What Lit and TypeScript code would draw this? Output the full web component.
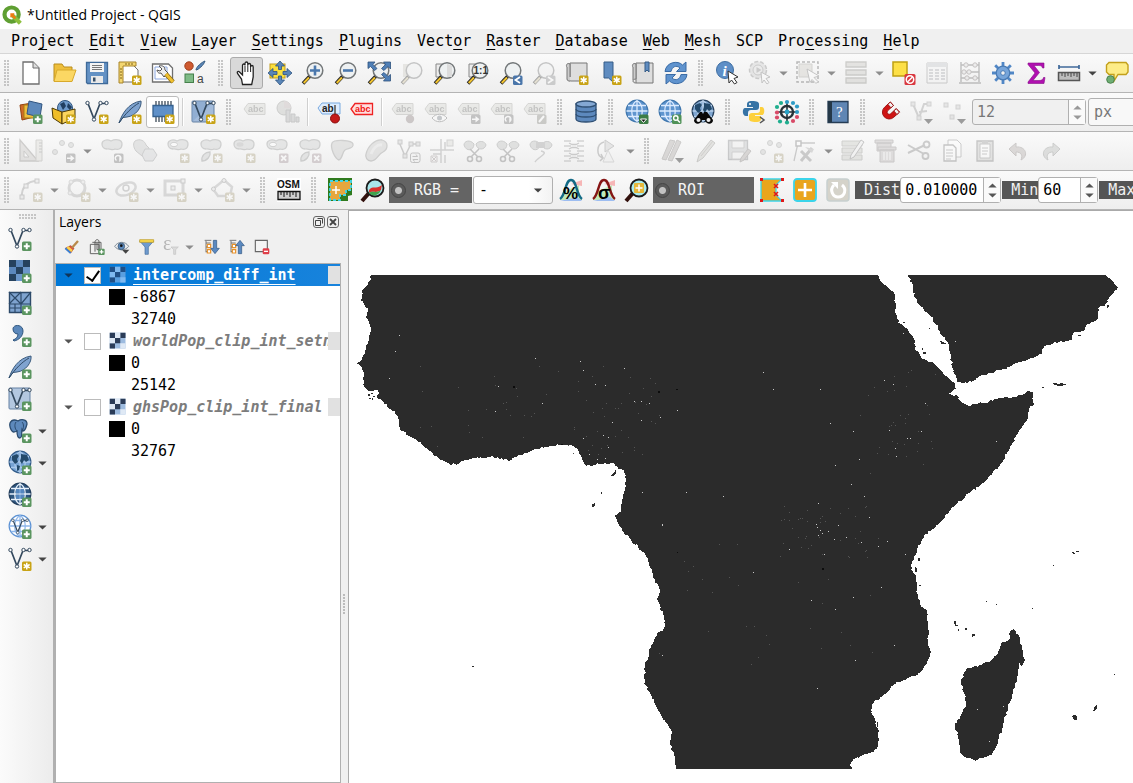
import { LitElement, html, svg, css, nothing } from "lit";
import { customElement, property } from "lit/decorators.js";
import { classMap } from "lit/directives/class-map.js";

/* ---------- icon building blocks (24 x 24 grid) ---------- */

const badge = (fill: string, mark: unknown) => svg`
  <rect x="14" y="14.500" width="9.500" height="9.500" rx="1.500" fill=${fill} />${mark}`;
const plusBadge = badge("#5b9560", svg`<path d="M18.750 16.200v6M15.750 19.200h6" stroke="#fff" stroke-width="2" />`);
const starBadge = badge("#c8a316", svg`<path d="M18.750 15.800v6.800M15.700 17.500l6 3.400M21.700 17.500l-6 3.400" stroke="#fff" stroke-width="1.500" />`);
const crossBadge = badge("#c9899b", svg`<path d="M16.200 16.700l5 5M21.200 16.700l-5 5" stroke="#fff" stroke-width="1.800" />`);
const arrowBadge = badge("#777", svg`<path d="M15 18.500h3.500v-2.500l4 3.200-4 3.300v-2.500H15z" fill="#fff" />`);
const turnBadge = badge("#777", svg`<path d="M16.500 21.500a2.800 2.800 0 1 1 3.500-.3v-3" fill="none" stroke="#fff" stroke-width="1.500" />`);

const lens = (inner: unknown, glass = "#eef1f2") => svg`
  <path d="M9 15l-7 7.500" stroke="#222" stroke-width="3.600" />
  <path d="M8 16.500l-5.300 5.500" stroke="#f2c430" stroke-width="2" />
  <circle cx="14" cy="9.500" r="7.800" fill=${glass} stroke="#737779" stroke-width="1.500" />${inner}`;

const vee = svg`
  <path d="M3 3.500L9 19 15 3.500h6.500" fill="none" stroke="#34495e" stroke-width="1.700" />
  <g fill="#fff" stroke="#34495e" stroke-width="1"><circle cx="2.500" cy="3" r="1.700" /><circle cx="9" cy="19.500" r="1.700" /><circle cx="15.500" cy="3" r="1.700" /><circle cx="21.500" cy="3" r="1.700" /></g>`;

const globe = (fill: string, line: string, edge = "#3f76ad") => svg`
  <circle cx="12" cy="11" r="10.800" fill=${fill} stroke=${edge} stroke-width="1.300" />
  <path d="M1.500 11h21M3 5.500h18M3 16.500h18M12 .5v21M12 .5c-7 4-7 17 0 21M12 .5c7 4 7 17 0 21" fill="none" stroke=${line} stroke-width="1.300" />`;
const land = svg`<path d="M4 5l5-2 2 2-2 3 1 3-3 2-3-4zM13 3l6 1 2 5-3 2-2-2-2 4-2-3 1-3zM9 14l3 1-1 4-2 1z" fill="#234a6b" />`;

const tag = svg`<path d="M1 9l4-5.500h17v11H5z" fill="#d6d7c0" stroke="#a2a58e" /><text x="5" y="12" font-size="9" font-weight="700" fill="#70736a" font-family="Liberation Sans, Arial, sans-serif">abc</text>`;
const blob = svg`<path d="M2 5c0-4 5-5 9-3 4-2 11-2 11 3s-4 6-7 5c-3 2-5-1-8 0-3 0-5-2-5-5z" fill="#c6cbca" stroke="#8e9492" stroke-width="1.300" />`;
const blobTail = svg`${blob}<path d="M3 22c-1-5 3-9 8-9 1 4-3 9-8 9z" fill="#c6cbca" stroke="#8e9492" stroke-width="1.300" />`;
const blobHole = svg`${blob}<ellipse cx="8" cy="5.500" rx="3.500" ry="2.200" fill="#fff" stroke="#8e9492" />`;
const feather = svg`<path d="M1 23C4 14 10 3 23 1c1 6-5 15-14 16l-4 .5z" fill="#7fa3cf" stroke="#3a5a7c" /><path d="M1 23C7 14 14 7 21 3" fill="none" stroke="#2f4a66" />`;
const dots = svg`<g fill="#c9cac8" stroke="#999c9a"><circle cx="3" cy="13" r="2.500" /><circle cx="10" cy="4" r="2.500" /><circle cx="19" cy="6" r="2.500" /></g>`;
const page = svg`<path d="M4 1h10l6 6v16H4z" fill="#fff" stroke="#6f6f6f" stroke-width="1.300" /><path d="M14 1v6h6" fill="#ddd" stroke="#6f6f6f" />`;
const checker = (a: string, b: string, c: string) => svg`
  <rect x="1" y="1" width="21" height="21" fill=${b} />
  <path d="M1 1h7v7H1zM15 1h7v7h-7zM8 8h7v7H8zM1 15h7v7H1z" fill=${a} />
  <path d="M8 1h7v7H8zM1 8h7v7H1zM15 15h7v7h-7z" fill=${c} />`;
const leaves = svg`<path d="M1 6c0-4 6-6 10-1 0 7-8 8-10 1zM13 5c3-4 9-3 10 1-1 5-9 6-10-1z" fill="#b9beb9" stroke="#858b87" />`;
const scissors = svg`<path d="M7 10l8 8M16 10l-8 8" stroke="#777" stroke-width="1.500" /><g fill="none" stroke="#777" stroke-width="1.600"><circle cx="7" cy="20" r="2.500" /><circle cx="16" cy="20" r="2.500" /></g>`;
const pencil = svg`<path d="M3 23l2-7L17 1l4 3L9 19z" fill="#c9c3ae" stroke="#8b8778" /><path d="M19 2L7 17" stroke="#9c947b" />`;
const database = svg`<path d="M2 4v15c0 4 20 4 20 0V4z" fill="#5d89bd" stroke="#2f4f73" stroke-width="1.300" /><ellipse cx="12" cy="4" rx="10" ry="3" fill="#84a8d3" stroke="#2f4f73" stroke-width="1.300" /><path d="M2 9c0 4 20 4 20 0M2 14c0 4 20 4 20 0" fill="none" stroke="#2f4f73" stroke-width="1.300" />`;
const tree = svg`<path d="M3 3v17M3 6h7M3 12h7M3 19h7M1 2h10" stroke="#666" fill="none" stroke-width="1.300" /><path d="M5 8h5v5H5zM5 16h5v5H5z" fill="#fff" stroke="#e8922a" stroke-width="1.800" />`;

const icons: Record<string, unknown> = {
  logo: svg`<circle cx="11.500" cy="11.500" r="8.500" fill="none" stroke="#5f9f32" stroke-width="5" /><path d="M12 12l10 10" stroke="#8cbf3c" stroke-width="5" /><path d="M10 10h5l-1 2 3 3-2 2-3-3-2 1z" fill="#ee7913" />`,
  file: page,
  folder: svg`<path d="M2 20V3h8l2 3h8v14z" fill="#eebf3c" stroke="#b98d1c" /><path d="M2 20.500L5 9h19l-4 11.500z" fill="#fbd763" stroke="#d8a92b" />`,
  save: svg`<path d="M1.500 1.500h21v21h-20l-1-1z" fill="#6391c4" stroke="#3f6a99" stroke-width="1.300" /><path d="M5 2h14v9H5z" fill="#f4f4f4" /><path d="M7 4.500h10M7 6.500h10M7 8.500h10" stroke="#777" /><path d="M6 15h12v7H6z" fill="#e9e9e9" /><path d="M8 16.500h2.500v4H8z" fill="#37506b" />`,
  layout: svg`<path d="M3 4h12l5 5v12H3z" fill="#fff" stroke="#6f6f6f" /><path d="M1 1h17v4H5v17H1z" fill="#f3d671" stroke="#a8842a" /><path d="M2 8h2M2 11h2M2 14h2M2 17h2M8 2v2M11 2v2M14 2v2" stroke="#80641c" />${starBadge}`,
  layouts: svg`<path d="M1.500 3h16l4 4v14h-20z" fill="#fff" stroke="#6f6f6f" stroke-width="1.300" /><path d="M4 6h12v12H4z" fill="none" stroke="#8aa6df" /><path d="M8 5c4-1 6 1 6 4l3 3-4 4-3-4c-3 1-4-2-4-3l3 1 2-2z" fill="#eee" stroke="#555" /><path d="M15 13l7 8" stroke="#8b6a12" stroke-width="4.500" /><path d="M15 13l7 8" stroke="#efc031" stroke-width="3" />`,
  style: svg`<circle cx="5" cy="5" r="4.200" fill="#cf5a30" stroke="#a03f1c" /><path d="M12 9c2 0 8-5 9-9-3 1-9 6-9 9z" fill="#5b87b9" stroke="#33597f" /><rect x="1" y="13" width="8.500" height="8.500" fill="#7fbb86" stroke="#45804b" /><text x="13" y="22" font-size="12" fill="#444" font-family="Liberation Sans, Arial, sans-serif">a</text>`,
  hand: svg`<path d="M7.500 23.500L6.500 18 2.500 12.500c-1-2 1-2.500 2-1.500L7.500 14V4.500c0-2 2.500-2 2.500 0V2.500c0-2 2.800-2 2.800 0V4c0-2 2.800-2 2.800 0v2c0-2 2.600-2 2.600 0v10l-1.500 7.500z" fill="#fff" stroke="#222" stroke-width="1.300" /><path d="M10 5v6M12.800 4v7M15.600 5v6" stroke="#222" />`,
  panto: svg`<rect x="2" y="3" width="15" height="14" fill="#fbdf3d" stroke="#c29b1b" /><path d="M12 0l4.500 5h-3v3.500h-3V5h-3zM12 24l-4.500-5h3v-4h3v4h3zM0 12l5-4.500v3h4v3H5v3zM24 12l-5-4.500v3h-4v3h4v3z" fill="#5a86b8" stroke="#2f5480" stroke-width=".8" />`,
  zoomin: lens(svg`<path d="M14 4.500v10M9 9.500h10" stroke="#4b78ad" stroke-width="2.600" />`),
  zoomout: lens(svg`<path d="M9 9.500h10" stroke="#4b78ad" stroke-width="2.600" />`),
  zoomfull: svg`${lens(nothing)}<path d="M1 1h7L6 3.500l4 4-2.500 2-4-4L1 7.500zM23.500 1h-7l2 2.500-4 4 2.500 2 4-4 2.500 2.500zM23.500 20h-7l2-2.500-4-4 2.500-2 4 4 2.500-2z" fill="#4f7fb6" stroke="#2d527c" stroke-width=".8" />`,
  zoomsel: svg`<rect x="3" y="3" width="12" height="13" fill="#cfceae" />${lens(nothing)}`,
  zoomlayer: svg`<path d="M3 3h14v13H3z" fill="#ececec" stroke="#888" />${lens(svg`<path d="M14 3v13h5V4z" fill="#dcdcdc" />`)}`,
  zoomone: svg`<path d="M3 3h14v13H3z" fill="#ececec" stroke="#888" />${lens(svg`<text x="7.500" y="13" font-size="10" font-weight="700" fill="#333" font-family="Liberation Sans, Arial, sans-serif">1:1</text>`)}`,
  zoomlast: svg`${lens(nothing)}${badge("#4a76aa", svg`<path d="M21 16l-4.500 3 4.500 3" fill="none" stroke="#fff" stroke-width="1.800" />`)}`,
  zoomnext: svg`${lens(nothing)}${badge("#8a8f94", svg`<path d="M16 16l4.500 3-4.500 3" fill="none" stroke="#fff" stroke-width="1.800" />`)}`,
  newview: svg`<path d="M5 2h17v18H6c-4 0-4-4-1-4z" fill="#dedede" stroke="#777" /><path d="M5 16V3C1 1 1 6 2 6v12c0 2 2 2 3 2" fill="#ccc" stroke="#777" />${starBadge}`,
  bookmark: svg`<path d="M6 1h9v20l-4.500-4H6z" fill="#5f8cc0" stroke="#365c87" />${starBadge}`,
  bookmarks: svg`<path d="M5 2h17v20H5z" fill="#dedede" stroke="#777" /><path d="M5 22c-4 0-4-4 0-4V3C1 1 1 6 2 6v13" fill="#ccc" stroke="#777" /><path d="M14 1h4v10l-2-2-2 2z" fill="#5f8cc0" stroke="#365c87" />`,
  refresh: svg`<path d="M1 10.500C2 1 14-1 18.500 4L22 1v9.500h-9.500L16 7C12 3.500 8 6 7 10.500z" fill="#5f93ce" stroke="#3a6ba5" /><path d="M23 13.500c-1 9.500-13 11.500-17.500 6.500L2 23v-9.500h9.500L8 17c4 3.500 8 1 9-3.500z" fill="#5f93ce" stroke="#3a6ba5" />`,
  info: svg`<circle cx="10" cy="9" r="8.500" fill="#5e8fc7" stroke="#3f6fa3" /><text x="7.500" y="14.500" font-size="15" font-weight="700" font-style="italic" fill="#fff" font-family="Liberation Serif, Times New Roman, serif">i</text><path d="M13 10l10 6-4 1.500 3 4-2.500 1.500-3-4-2.500 3z" fill="#fff" stroke="#333" />`,
  action: svg`<circle cx="10" cy="9" r="8.500" fill="#ccc" stroke="#888" stroke-width="1.500" stroke-dasharray="4 2" /><circle cx="10" cy="9" r="5" fill="#ddd" stroke="#888" /><path d="M8.500 6l5 3-5 3z" fill="#888" /><path d="M13 11l9 5-4 1.500 3 4-2 1.500-3-4-2 3z" fill="#fff" stroke="#777" />`,
  select: svg`<path d="M1 1h21v20H1z" fill="none" stroke="#555" stroke-dasharray="3 2" stroke-width="1.500" /><path d="M3 3h13v13H3z" fill="#d2ccae" stroke="#a39e80" /><path d="M11 8l12 7-5 1.500 4 4-2 2-4-4-2 3z" fill="#fff" stroke="#777" />`,
  bars: svg`<path d="M2 1h20v5H2zM2 9h20v5H2zM2 17h20v5H2z" fill="#cac6b0" stroke="#8e8b78" stroke-width="1.300" />`,
  deselect: svg`<rect x="1" y="1" width="14" height="14" fill="#fde047" stroke="#bfa013" stroke-width="1.500" /><rect x="12.500" y="13" width="11" height="11" rx="1.500" fill="#d9363e" /><circle cx="18" cy="18.500" r="3.700" fill="none" stroke="#fff" stroke-width="1.500" /><path d="M15.500 21l5-5" stroke="#fff" stroke-width="1.500" />`,
  table: svg`<path d="M2 2h20v20H2z" fill="#f4f4f4" stroke="#888" /><path d="M2 2h20v4H2z" fill="#b9c6d6" /><path d="M4 9h4M10 9h4M16 9h4M4 12h4M10 12h4M16 12h4M4 15h4M10 15h4M16 15h4M4 18h4M10 18h4M16 18h4" stroke="#8b98ab" stroke-width="1.500" />`,
  abacus: svg`<path d="M3 1v20M21 1v20M1 22h22M3 4h18M3 11h18M3 17h18" stroke="#666" stroke-width="1.400" /><g fill="#ddd" stroke="#866"><circle cx="8" cy="4" r="2.200" /><circle cx="17" cy="4" r="2.200" /><circle cx="6" cy="11" r="2.200" /><circle cx="11" cy="11" r="2.200" /><circle cx="17" cy="17" r="2.200" /><circle cx="9" cy="17" r="2.200" /></g>`,
  gear: svg`<g stroke="#5187c6" stroke-width="2.800"><path d="M12 1v22M1 12h22M4.200 4.200l15.600 15.600M19.800 4.200L4.200 19.800" /></g><circle cx="12" cy="12" r="6.800" fill="#77a5da" stroke="#4b7cb5" stroke-width="1.300" /><circle cx="12" cy="12" r="2.300" fill="#f2f2f2" stroke="#4b7cb5" />`,
  sigma: svg`<path d="M4 2h16v5h-1.500c-.5-2-1.500-2.500-4-2.500H10l5.500 7-6.500 8h6c3 0 4-1 4.500-3H21l-1 6H4v-1.500L11 12 4 3.500z" fill="#b010b0" stroke="#860d86" stroke-width=".6" />`,
  ruler: svg`<path d="M2 6h20M2 4v4M22 4v4" stroke="#40699a" stroke-width="1.700" /><path d="M1.500 11.500h21v8h-21z" fill="#bdbdbd" stroke="#555" stroke-width="1.500" /><path d="M5 12v3M8 12v4M11 12v3M14 12v4M17 12v3M20 12v4" stroke="#444" />`,
  tip: svg`<path d="M4 1.500h17l2 2.500v7l-2 2.500h-8L9 20v-6.500H4L1.500 11V4z" fill="#fdec87" stroke="#c3a01b" stroke-width="1.400" /><circle cx="5.500" cy="18.500" r="3.800" fill="#6fae74" stroke="#48824d" />`,

  sources: svg`<path d="M1 5l12-2 2 14-12 3z" fill="#cf6a27" stroke="#94430e" /><path d="M5 5h13v13H5z" fill="#eebe3d" stroke="#a67b13" /><path d="M10 1l13 3-2 13L8 14z" fill="#5e89bb" stroke="#315580" />${plusBadge}`,
  geopackage: svg`<circle cx="13" cy="8" r="7.500" fill="#6f9bcb" stroke="#2f557f" /><path d="M8 4l4-2 2 4-3 4zM16 3l4 4-2 3-3-3z" fill="#213f61" /><path d="M0 8l10 4v12L1 18z" fill="#efbd28" stroke="#4a3804" /><path d="M10 12l13-3v9l-13 6z" fill="#fad55f" stroke="#4a3804" />${starBadge}`,
  newshape: svg`${vee}${starBadge}`,
  newspatia: svg`${feather}${starBadge}`,
  memory: svg`<path d="M5 1v21M8 1v21M11 1v21M14 1v21M17 1v21M20 1v21" stroke="#3c4a58" stroke-width="1.300" /><path d="M2 5.500h20v11H2z" fill="#5f90c8" stroke="#35618f" stroke-width="1.300" />${starBadge}`,
  virtual: svg`<rect x="0" y="1" width="22" height="21" rx="1" fill="#a4bcdb" stroke="#6581a3" /><path d="M0 1h22L0 22z" fill="#7e9fc9" opacity=".5" />${vee}${starBadge}`,
  label: tag,
  diagram: svg`<circle cx="8" cy="8" r="7" fill="#bdbfb0" stroke="#878a80" /><path d="M8 8V1a7 7 0 0 1 7 7z" fill="#d9a8a8" /><path d="M10 10h4v12h-4zM15 14h4v8h-4zM20 17h3v5h-3z" fill="#aeb3b5" stroke="#80868a" />`,
  labelpin: svg`<path d="M1 8l4-5h18v11H5z" fill="#dcecff" stroke="#79a9df" /><text x="5" y="11.500" font-size="10" font-weight="700" fill="#222" font-family="Liberation Sans, Arial, sans-serif">ab</text><path d="M18 5v10" stroke="#777" stroke-width="2" /><circle cx="18" cy="18.500" r="4.500" fill="#c41919" stroke="#8b0d0d" />`,
  labelred: svg`<path d="M1 9l4-5.500h17.500v11H5z" fill="#ffdede" stroke="#ee2222" stroke-width="1.300" /><text x="5" y="12" font-size="9" font-weight="700" fill="#ef1515" font-family="Liberation Sans, Arial, sans-serif">abc</text>`,
  labelpin2: svg`${tag}<circle cx="19" cy="19" r="4.200" fill="#a97d7d" />`,
  labeleye: svg`${tag}<path d="M8 18c4-5 11-5 15 0-4 5-11 5-15 0z" fill="#fff" stroke="#666" /><circle cx="15.500" cy="18" r="2.500" fill="#6886a6" />`,
  labelmove: svg`${tag}${arrowBadge}`,
  labelturn: svg`${tag}${turnBadge}`,
  labeledit: svg`${tag}${badge("#8b8b72", svg`<path d="M16 22l5-6" stroke="#fff" stroke-width="2" />`)}`,
  database,
  webadd: svg`${globe("#5f95cf", "#dcebff")}${badge("#3c7c46", svg`<path d="M15.500 19h6l-3 3.500z" fill="#111" stroke="#fff" />`)}`,
  websearch: svg`${globe("#5f95cf", "#dcebff")}${badge("#4f9157", svg`<circle cx="17.800" cy="18" r="2.200" fill="none" stroke="#fff" stroke-width="1.400" /><path d="M19.500 20l2.500 2.500" stroke="#fff" stroke-width="1.500" />`)}`,
  binocular: svg`${globe("#7fa6d0", "#b8d0ea", "#25405d")}${land}<path d="M9 12h2l1 2 1-2h3l6 8c0 5-7 5-8 0h-3c-1 5-8 5-8 0z" fill="#080808" /><circle cx="7.500" cy="20" r="2" fill="#eee" /><circle cx="17.500" cy="20" r="2" fill="#eee" />`,
  python: svg`<path d="M10 1c-4 0-5 1-5 4v2h6v1H3c-3 0-3 8 1 8h2v-3c0-2 1-3 3-3h5c2 0 3-1 3-3V4c0-2-2-3-7-3z" fill="#3673a5" /><circle cx="8" cy="4" r="1" fill="#fff" /><path d="M14 22c4 0 5-1 5-4v-2h-6v-1h7c3 0 3-8 0-8h-2v3c0 2-1 3-3 3h-5c-2 0-3 1-3 3v3c0 2 2 3 7 3z" fill="#fdd03c" /><path d="M18 17l4 3-4 3" fill="none" stroke="#555" stroke-width="1.500" />`,
  cluster: svg`<circle cx="12" cy="12" r="6" fill="none" stroke="#263238" stroke-width="2.400" /><path d="M12 3v18M3 12h18" stroke="#263238" stroke-width="1.600" /><circle cx="12" cy="12" r="2.400" fill="#27a3c8" /><g fill="#2f9cc6"><circle cx="12" cy="2" r="2.100" /><circle cx="18" cy="3" r="2.100" /><circle cx="22" cy="6.500" r="2.100" /><circle cx="22" cy="12" r="2.100" /></g><g fill="#1fae8e"><circle cx="6" cy="3" r="2.100" /><circle cx="2" cy="7" r="2.100" /><circle cx="5" cy="21.500" r="2.100" /><circle cx="12" cy="22.500" r="2.100" /></g><g fill="#d84a67"><circle cx="2" cy="12.500" r="2.100" /><circle cx="2" cy="17.500" r="2.100" /><circle cx="18" cy="21" r="2.100" /><circle cx="22" cy="17" r="2.100" /></g>`,
  help: svg`<path d="M2 1.500h20v21H2z" fill="#5f86b4" stroke="#253c55" stroke-width="1.300" /><path d="M2 1.500h4v21H2z" fill="#253848" /><text x="10" y="17" font-size="15" fill="#fff" font-family="Liberation Serif, Times New Roman, serif">?</text>`,
  magnet: svg`<g transform="translate(2 2) scale(.85) rotate(48 12 12)"><path d="M4 3v9a8 8 0 0 0 16 0V3h-5.500v9a2.500 2.500 0 0 1-5 0V3z" fill="#cf1414" stroke="#9a0b0b" /><path d="M4 3h5.500v4H4zM14.500 3H20v4h-5.500z" fill="#f2f2f2" stroke="#9a0b0b" /></g>`,
  snapvee: svg`<path d="M3 4l6 14 5-14h5M9 12l8-1" fill="none" stroke="#999" stroke-width="2" /><g fill="#ccc" stroke="#999"><rect x="1" y="2" width="4" height="4" /><rect x="7" y="16" width="4" height="4" /><rect x="17" y="2" width="4" height="4" /></g><path d="M14 19h9l-4.500 5z" fill="#111" />`,
  snapdots: svg`<g fill="#ccc" stroke="#999"><rect x="1" y="3" width="4" height="4" /><rect x="13" y="5" width="4" height="4" /><rect x="7" y="15" width="4" height="4" /></g><path d="M14 19h9l-4.500 5z" fill="#111" />`,

  cad: svg`<path d="M1 1l18 21H1z" fill="#cfc3b6" stroke="#948a7f" stroke-width="1.300" /><path d="M5 12l5 6H5z" fill="#f6f6f6" stroke="#948a7f" /><path d="M17 1h6v21h-6z" fill="#dedbc6" stroke="#a39f88" /><path d="M20 4h3M20 7h3M20 10h3M20 13h3" stroke="#888" />`,
  movepts: svg`${dots}${arrowBadge}`,
  rotate: svg`${blob}${turnBadge}`,
  simplify: svg`<path d="M2 2c5-3 10 0 11 4l3 3v8H9L3 12C0 8 0 4 2 2z" fill="#c2c6c4" stroke="#8c918f" /><path d="M12 10h8l4 6-4 6h-8l-3-6z" fill="#c9d1d7" stroke="#8b949b" />`,
  addring: svg`${blobHole}${starBadge}`,
  addpart: svg`${blobTail}${starBadge}`,
  fillring: svg`${blob}<ellipse cx="8" cy="5.500" rx="3.500" ry="2.200" fill="#aaa" />${starBadge}`,
  delring: svg`${blobHole}${crossBadge}`,
  delpart: svg`${blobTail}${crossBadge}`,
  reshape: svg`<path d="M1 4c2-4 20-3 21 1 1 5-5 4-8 6s-2 8-6 10c-4-1-9-12-7-17z" fill="#c4c6c0" stroke="#8f918c" stroke-width="1.300" />`,
  offset: svg`<path d="M2 15C4 7 11 0 18 1c7 2 6 9 1 12-5 2-6 9-12 9-4 0-6-4-5-7z" fill="#c4c6c0" stroke="#8f918c" stroke-width="1.300" /><path d="M7 15C9 10 13 5 18 6" fill="none" stroke="#ddd" stroke-width="3" />`,
  splitfeat: svg`<path d="M2 3l6 14 6-12h8" fill="none" stroke="#888" stroke-width="1.500" /><g fill="#ccc" stroke="#888"><rect x="1" y="1" width="4" height="4" /><rect x="6" y="15" width="4" height="4" /><rect x="12" y="3" width="4" height="4" /><rect x="19" y="3" width="4" height="4" /></g><rect x="13.500" y="14" width="9.500" height="9.500" rx="2" fill="#eee" stroke="#777" /><path d="M15.500 17.500h5l-1.500-2M21 20.500h-5l1.500 2" stroke="#777" fill="none" />`,
  crosslines: svg`<path d="M11 0v24M15 3v8M15 16v8M0 11h24M3 15h8" stroke="#999" stroke-width="1.500" /><rect x="17" y="1" width="6" height="6" fill="#d7d9c2" stroke="#999" /><path d="M1 17h6v6H1zM2 18l4 4M6 18l-4 4" stroke="#a88" fill="#eee" />`,
  split: svg`${leaves}${scissors}`,
  splitpart: svg`${leaves}${scissors}`,
  merge: svg`${leaves}<path d="M7 3h9v6H7z" fill="#999" /><path d="M12 12c9 2-3 6-6 11" fill="none" stroke="#999" stroke-width="1.500" />`,
  mergeatt: svg`<path d="M2 2h7M15 2h7M2 7h7M15 7h7M2 12h7M15 12h7M2 17h7M15 17h7M2 22h7M15 22h7" stroke="#999" stroke-width="1.500" /><path d="M7 4l3 1.500h4L17 4M7 10l3-1.500h4l3 1.500M7 14l3 1.500h4l3-1.500M7 20l3-1.500h4l3 1.500" fill="none" stroke="#888" stroke-width="1.300" />`,
  rotsym: svg`<path d="M9 3C1 5 1 17 8 19l-3 3M8 19l-2-4" fill="none" stroke="#888" stroke-width="1.500" /><path d="M10 1l9 6-9 6z" fill="#ccc" stroke="#888" /><path d="M13 11l6 12H8z" fill="#eee" stroke="#aaa" />`,
  pencils: svg`<path d="M1 20L9 1l5 1-9 19zM7 21L16 1l4 2-9 19z" fill="#b7a79d" stroke="#8d7f77" /><path d="M14 19h9l-4.500 5z" fill="#111" />`,
  pencil,
  saveedit: svg`<path d="M1.500 1.500h19v19h-19z" fill="#b9c1c9" stroke="#7e868f" stroke-width="1.300" /><path d="M5 2h12v7H5zM5 13h12v7H5z" fill="#eee" stroke="#999" /><path d="M13 23l1-4 7-9 3 2-7 9z" fill="#b8a49a" stroke="#8b7a70" />`,
  addpts: svg`${dots}${starBadge}`,
  vertex: svg`<path d="M5 4h17M5 4L1 22" stroke="#888" stroke-width="1.300" /><rect x="3" y="2" width="5" height="5" fill="#fff" stroke="#777" stroke-width="1.500" /><path d="M8 12l10 10M19 9L8 22" stroke="#888" stroke-width="3" /><path d="M12 8l9 2-2 4" fill="#aaa" />`,
  multiedit: svg`<path d="M1 2h20v5H1zM1 9h20v5H1zM1 16h20v5H1z" fill="#cacbb4" stroke="#929380" /><path d="M9 20l1-4L20 1l3 2-10 15z" fill="#eee" stroke="#777" />`,
  trash: svg`<path d="M1 1h18v3H1zM3 4h14v8H3z" fill="#c9b3b3" stroke="#948484" /><path d="M4 8h18v3H4zM6 11h14v12H6z" fill="#c9b3b3" stroke="#948484" /><path d="M10 13v8M13 13v8M16 13v8" stroke="#fff" />`,
  cut: svg`<path d="M1 6l16 9M1 14l17-8" stroke="#888" stroke-width="2" /><circle cx="19.500" cy="5.500" r="3" fill="none" stroke="#888" stroke-width="1.800" /><circle cx="18.500" cy="17" r="3" fill="none" stroke="#888" stroke-width="1.800" />`,
  copy: svg`<path d="M8 1h9l4 4v13H8z" fill="#fff" stroke="#888" /><path d="M4 6h9l3 3v13H4z" fill="#fff" stroke="#777" stroke-width="1.300" /><path d="M6 11h7M6 14h7M6 17h7M6 20h5" stroke="#888" />`,
  paste: svg`<path d="M4 2h16v20H4z" fill="#c6c6c0" stroke="#777" stroke-width="1.300" /><path d="M7 5h10v14H7z" fill="#fff" stroke="#888" /><path d="M9 1h6v4H9z" fill="#999" /><path d="M9 9h6M9 12h6M9 15h5" stroke="#888" />`,
  undo: svg`<path d="M3 10l7-6v4c10-1 13 9 5 13 2-5 0-8-5-8v4z" fill="#c2a79e" stroke="#967f77" />`,
  redo: svg`<path d="M21 10l-7-6v4C4 7 1 17 9 21c-2-5 0-8 5-8v4z" fill="#b3bab3" stroke="#838c83" />`,

  arc: svg`<path d="M3 19C2 10 8 3 18 3" fill="none" stroke="#999" stroke-width="2" /><g fill="#ddd" stroke="#888"><rect x="1" y="17" width="4" height="4" /><rect x="16" y="1" width="4" height="4" /><rect x="5" y="6" width="4" height="4" /></g>${starBadge}`,
  circle: svg`<circle cx="10" cy="10" r="8" fill="none" stroke="#aaa" stroke-width="3" /><g fill="#ddd" stroke="#aaa"><circle cx="4" cy="4" r="2" /><circle cx="16" cy="4" r="2" /><circle cx="3" cy="15" r="2" /></g>${starBadge}`,
  ellipse: svg`<ellipse cx="11" cy="11" rx="10" ry="6" fill="none" stroke="#aaa" stroke-width="2.500" transform="rotate(-20 11 11)" /><circle cx="11" cy="10" r="3" fill="none" stroke="#999" stroke-width="1.500" />${starBadge}`,
  rectangle: svg`<path d="M2 3h18v14H2z" fill="none" stroke="#aaa" stroke-width="3" /><g fill="#ddd" stroke="#888"><rect x="8" y="8" width="4" height="4" /><rect x="18" y="1" width="4" height="4" /></g>${starBadge}`,
  polygon: svg`<path d="M13 2l8 7-2 9H7L2 11z" fill="none" stroke="#aaa" stroke-width="2.500" /><g fill="#ddd" stroke="#888"><circle cx="13" cy="2.500" r="2" /><circle cx="2.500" cy="11" r="2" /></g>${starBadge}`,
  osm: svg`<path d="M0 0h24v24H0z" fill="#fff" /><text x="0" y="9.500" font-size="10" font-weight="700" fill="#111" font-family="Liberation Sans, Arial, sans-serif">OSM</text><path d="M1 13.500h22v8H1z" fill="#cfcfcf" stroke="#111" stroke-width="1.300" /><path d="M4 14v3M7 14v5M10 14v3M13 14v5M16 14v3M19 14v5" stroke="#111" />`,
  scp: svg`<path d="M0 0h24v17l-4 1v5H0z" fill="#2f7a1e" /><path d="M2 3h21v9h-5v5h-6v5H2z" fill="#e6a73f" stroke="#42d6e8" stroke-width="1.800" stroke-dasharray="3 2" /><path d="M8 8v8M4 12h8" stroke="#fff" stroke-width="1.500" />`,
  scpband: svg`<path d="M8 15l-7 8" stroke="#32100c" stroke-width="4" /><circle cx="14" cy="10" r="8.500" fill="#a9e6ea" stroke="#1b1b1b" stroke-width="1.800" /><path d="M8 12c4-5 6 0 13-5l-1 5c-5 4-8 0-12 3z" fill="#d9312b" /><path d="M8 15c4-3 7 1 12-3-2 6-9 7-12 3z" fill="#3fa34d" />`,
  stretchp: svg`<path d="M4 14l16-7v7l3 8H1z" fill="#bfe9b9" /><path d="M12 6l11-4v6z" fill="#f6b6b6" /><path d="M1 23h22l-5-4z" fill="#9dbdf1" /><path d="M1 21C7 17 6 2 12 2s5 15 11 19" fill="none" stroke="#136a86" stroke-width="2.400" /><text x="4" y="21" font-size="17" font-weight="700" fill="#000" font-family="Liberation Sans, Arial, sans-serif">%</text>`,
  stretchs: svg`<path d="M4 14l16-7v7l3 8H1z" fill="#bfe9b9" /><path d="M12 6l11-4v6z" fill="#f6b6b6" /><path d="M1 23h22l-5-4z" fill="#9dbdf1" /><path d="M1 21C7 17 6 2 12 2s5 15 11 19" fill="none" stroke="#861515" stroke-width="2.400" /><text x="6" y="21" font-size="18" font-weight="700" fill="#000" font-family="Liberation Sans, Arial, sans-serif">σ</text>`,
  roizoom: svg`<path d="M8 15l-7 8" stroke="#32100c" stroke-width="4" /><circle cx="14" cy="10" r="8.500" fill="#a9ecf0" stroke="#1b1b1b" stroke-width="1.800" /><rect x="9" y="5" width="10" height="10" rx="1" fill="#e6b93c" /><path d="M14 6.500v7M10.500 10h7" stroke="#fff" stroke-width="1.500" />`,
  roipoly: svg`<path d="M1 1h21l-6 6v10l6 6H1z" fill="#e9a51c" stroke="#3bd4ea" stroke-width="1.300" /><path d="M0 0h3v3H0zM0 21h3v3H0zM21 0h3v3h-3zM21 21h3v3h-3z" fill="#e01818" /><path d="M14 6l4 4M18 6l-4 4M14 14l4 4M18 14l-4 4" stroke="#e01818" stroke-width="1.600" />`,
  roiadd: svg`<rect x="1" y="1" width="22" height="22" rx="3" fill="#e9a51c" stroke="#3bd4ea" stroke-width="1.800" /><path d="M12 5v14M5 12h14" stroke="#fff" stroke-width="2.600" />`,
  roiredo: svg`<rect x="1" y="1" width="22" height="22" rx="3" fill="#d5d3ca" stroke="#c7d0cf" stroke-width="1.500" /><path d="M8 7c-5 5-1 12 4 12 7 0 9-8 4-12" fill="none" stroke="#fff" stroke-width="3" /><path d="M5 4h7v7z" fill="#fff" />`,

  addvector: svg`${vee}${plusBadge}`,
  addraster: svg`${checker("#26425f", "#6c97ca", "#5c88bd")}${plusBadge}`,
  addmesh: svg`<path d="M1.500 1.500h21v20h-21z" fill="#7ea3cf" stroke="#2d4a6a" stroke-width="1.400" /><path d="M1 13h22M13 1v20M1 1l12 12M13 1L1 13M23 1L13 13M7 13v9M1 17h12" stroke="#2d4a6a" fill="none" stroke-width="1.200" />${plusBadge}`,
  addcsv: svg`<path d="M5 6c0-5 10-5 10 2 0 5-4 9-9 10l-1-1c3-1 5-3 5-6-3 0-5-2-5-5z" fill="#5b88bb" stroke="#31577f" />${plusBadge}`,
  addspatia: svg`${feather}${plusBadge}`,
  addvirtual: svg`<rect x="1" y="1" width="21" height="21" rx="1" fill="#b3c7e0" stroke="#6581a3" />${vee}${plusBadge}`,
  addpg: svg`<path d="M2 4c2-4 6-3 8-2 3-2 9-2 9 3-1 4-2 7-4 7l-1-2c-1 4 1 8-2 9-3 0-3-5-3-7-2 1-4 2-5 0C3 11 1 7 2 4z" fill="#5d89bc" stroke="#2b4c70" stroke-width="1.300" /><path d="M8 3c-2 3-1 7 1 9M14 3c2 2 2 6 0 9" stroke="#2b4c70" fill="none" />${plusBadge}`,
  addwms: svg`${globe("#76a3d4", "#a9c8ea", "#315b88")}${land}${plusBadge}`,
  addwcs: svg`${globe("#2d557f", "#e6f0fb", "#233e5c")}<path d="M8 6.200h8v4.200H8zM8 11.600h8v4.200H8z" fill="#5f93cf" opacity=".8" />${plusBadge}`,
  addwfs: svg`${globe("#fff", "#8db6ea", "#5c92d4")}<g transform="translate(3 3) scale(.75)">${vee}</g>${plusBadge}`,

  brush: svg`<path d="M2 14l8 7 5-7-5-4z" fill="#e0503c" stroke="#9d3527" /><path d="M2 14l8 7" stroke="#3b7fd1" stroke-width="3" /><path d="M5 12l7 6" stroke="#fbd24a" stroke-width="3.500" /><path d="M12 13l9-10" stroke="#b98a4c" stroke-width="3.500" />`,
  group: svg`<path d="M2 8h13v14H2zM5 5h13v14" fill="none" stroke="#666" stroke-width="1.500" /><path d="M9 19V4c1-4 6-4 6 0v12h-3V6" fill="none" stroke="#555" stroke-width="1.400" />${plusBadge}`,
  eye: svg`<path d="M1 11C6 3 17 3 22 11 17 18 6 18 1 11z" fill="#eee" stroke="#7d8b98" stroke-width="1.500" /><circle cx="11" cy="11" r="5" fill="#5b88ba" stroke="#2c4a69" /><circle cx="11" cy="10" r="2" fill="#111" /><path d="M12 16h11l-5.500 6z" fill="#444" />`,
  filter: svg`<path d="M1 3h21l-8 9v11H9V12z" fill="#6f9bcf" stroke="#416b9b" /><path d="M1 1h21v4H1z" fill="#fbd94c" stroke="#b8951f" />`,
  expr: svg`<text x="0" y="17" font-size="30" fill="#555" font-family="Liberation Serif, Times New Roman, serif">ε</text><path d="M12 12h11l-4 4v7h-3v-7z" fill="#bbb" stroke="#777" />`,
  expand: svg`${tree}<path d="M14 2h5v12h4l-6.500 8L10 14h4z" fill="#5b89c0" stroke="#2f5580" />`,
  collapse: svg`${tree}<path d="M14 22h5V10h4L16.500 2 10 10h4z" fill="#5b89c0" stroke="#2f5580" />`,
  remove: svg`<path d="M2 2h18v17H2z" fill="#f4f4f4" stroke="#666" stroke-width="1.700" /><rect x="13" y="14" width="10" height="9" rx="2" fill="#e0404a" /><path d="M15 18.500h6" stroke="#fff" stroke-width="2" />`,
  rasteron: svg`${checker("#1f4f86", "#5a9fe0", "#7fb9f0")}`,
  raster: svg`${checker("#2b3c58", "#9dbbdf", "#dfe9f5")}`,
};

const icon = (name: string) => html`<svg class="icon" viewBox="0 0 24 24" fill="none" aria-hidden="true">${icons[name]}</svg>`;
const caret = html`<svg class="caret" viewBox="0 0 10 6" aria-hidden="true"><path d="M0 .5h10L5 5.500z" fill="currentColor" /></svg>`;

/* ---------- shared styles ---------- */

const shared = css`
  :host { --mono: "DejaVu Sans Mono", Consolas, monospace; --ui: "Open Sans", "Segoe UI", sans-serif; }
  * { box-sizing: border-box; }
  button, input, select { font: inherit; color: inherit; margin: 0; padding: 0; border: 0; background: none; }
  .icon { width: 24px; height: 24px; display: block; flex: none; overflow: visible; }
  .caret { width: 9px; height: 5px; display: block; flex: none; }
  .tool { flex: none; display: flex; align-items: center; height: 32px; padding: 0 4px; border: 1px solid transparent; border-radius: 3px; color: #444; }
  .tool.drop { gap: 7px; padding-right: 0; width: 48px; }
  .tool:not(.drop) { width: 33px; justify-content: center; }
  .tool.pressed { background: #d9d9d9; border-color: #ababab; }
  .tool.checked { background: #fff; border-color: #bcbcbc; }
  .tool.off { color: #8d8d8d; }
  .tool.off .icon { filter: grayscale(.75); opacity: .38; }
`;

interface Item {
  kind?: "grip" | "sep" | "rgb" | "roi" | "combo" | "spin" | "unit";
  icon?: string;
  label?: string;
  off?: boolean;
  menu?: boolean;
  state?: "pressed" | "checked";
  value?: string;
  size?: string;
}
const grip: Item = { kind: "grip" };
const sep: Item = { kind: "sep" };
const b = (name: string, label: string, extra: Partial<Item> = {}): Item => ({ icon: name, label, ...extra });
const off = { off: true };
const offMenu = { off: true, menu: true };

const rows: Item[][] = [
  [
    grip, b("file", "New project"), b("folder", "Open project"), b("save", "Save project"), b("layout", "New print layout"), b("layouts", "Layout manager"), b("style", "Style manager"),
    grip, b("hand", "Pan map", { state: "pressed" }), b("panto", "Pan map to selection"), b("zoomin", "Zoom in"), b("zoomout", "Zoom out"), b("zoomfull", "Zoom full"),
    b("zoomsel", "Zoom to selection", off), b("zoomlayer", "Zoom to layer"), b("zoomone", "Zoom to native resolution"), b("zoomlast", "Zoom last"), b("zoomnext", "Zoom next", off),
    b("newview", "New map view"), b("bookmark", "New bookmark"), b("bookmarks", "Show bookmarks"), b("refresh", "Refresh"),
    grip, b("info", "Identify features"), b("action", "Run feature action", offMenu), b("select", "Select features", offMenu), b("bars", "Select by value", offMenu),
    b("deselect", "Deselect features"), b("table", "Open attribute table", off), b("abacus", "Field calculator", off), b("gear", "Processing toolbox"), b("sigma", "Statistical summary"), b("ruler", "Measure line", { menu: true }), b("tip", "Map tips"),
  ],
  [
    grip, b("sources", "Data source manager"), b("geopackage", "New GeoPackage layer"), b("newshape", "New shapefile layer"), b("newspatia", "New SpatiaLite layer"), b("memory", "New temporary scratch layer", { state: "checked" }), sep, b("virtual", "New virtual layer"),
    grip, b("label", "Layer labeling", off), b("diagram", "Layer diagrams", off), sep, b("labelpin", "Highlight pinned labels"), b("labelred", "Toggle unplaced labels"), sep,
    b("labelpin2", "Pin labels", off), b("labeleye", "Show or hide labels", off), b("labelmove", "Move label", off), b("labelturn", "Rotate label", off), b("labeledit", "Change label", off),
    grip, b("database", "DB manager"), grip, b("webadd", "Add web layer"), b("websearch", "Search web layers"), b("binocular", "MetaSearch"),
    grip, b("python", "Python console"), b("cluster", "Clustering"), grip, b("help", "Help contents"),
    grip, b("magnet", "Enable snapping"), b("snapvee", "Snapping layers", off), b("snapdots", "Snapping type", off), { kind: "spin", label: "Snapping tolerance", value: "12", size: "wide", off: true }, { kind: "unit", label: "Tolerance unit", value: "px" },
  ],
  [
    grip, b("cad", "Advanced digitizing tools", off), b("movepts", "Move feature", offMenu), b("rotate", "Rotate feature", off), b("simplify", "Simplify feature", off), b("addring", "Add ring", off), b("addpart", "Add part", off), b("fillring", "Fill ring", off),
    b("delring", "Delete ring", off), b("delpart", "Delete part", off), b("reshape", "Reshape features", off), b("offset", "Offset curve", off), b("splitfeat", "Reverse line", off), b("crosslines", "Trim or extend", off), b("split", "Split features", off),
    b("splitpart", "Split parts", off), b("merge", "Merge features", off), b("mergeatt", "Merge attributes", off), b("rotsym", "Rotate point symbols", offMenu),
    grip, b("pencils", "Current edits", off), b("pencil", "Toggle editing", off), b("saveedit", "Save layer edits", off), b("addpts", "Add point feature", off), b("vertex", "Vertex tool", offMenu), b("multiedit", "Modify attributes", off),
    b("trash", "Delete selected", off), b("cut", "Cut features", off), b("copy", "Copy features", off), b("paste", "Paste features", off), b("undo", "Undo", off), b("redo", "Redo", off),
  ],
  [
    grip, b("arc", "Add circular string", offMenu), b("circle", "Add circle", offMenu), b("ellipse", "Add ellipse", offMenu), b("rectangle", "Add rectangle", offMenu), b("polygon", "Add regular polygon", offMenu),
    grip, b("osm", "OSM info"), grip, b("scp", "Classification plugin"), b("scpband", "Band set"), { kind: "rgb", label: "RGB =" }, { kind: "combo", label: "Color composite", value: "-" },
    b("stretchp", "Cumulative count stretch"), b("stretchs", "Standard deviation stretch"), b("roizoom", "Zoom to temporary ROI"), { kind: "roi", label: "ROI" },
    b("roipoly", "Create ROI polygon"), b("roiadd", "Activate ROI pointer"), b("roiredo", "Redo ROI"),
    { kind: "spin", label: "Dist", value: "0.010000", size: "mid" }, { kind: "spin", label: "Min", value: "60", size: "small" }, { kind: "spin", label: "Max", value: "100", size: "small" },
  ],
];

@customElement("tool-row")
class ToolRow extends LitElement {
  @property({ attribute: false }) items: Item[] = [];

  static styles = [
    shared,
    css`
      :host { display: flex; align-items: center; height: 39px; flex: none; overflow: hidden; border-bottom: 1px solid #b4b4b4; background: linear-gradient(#fafafa, #eeeeee); font: 15px/20px var(--mono); }
      .grip { flex: none; width: 18px; height: 27px; display: flex; justify-content: center; }
      .grip:first-child { width: 14px; }
      .grip::before { content: ""; width: 6px; background: radial-gradient(circle at 1px 1px, #b5b5b5 0.6px, transparent 1px) 0 0 / 3px 3px; }
      .sep { flex: none; width: 2px; height: 28px; margin: 0 3px; background: linear-gradient(90deg, #cfcfcf 50%, #fff 50%); }
      .plate { flex: none; display: flex; align-items: center; gap: 8px; height: 26px; padding-left: 2px; margin-right: 1px; background: #646464; color: #f4f4f4; }
      .rgb { width: 83px; }
      .roi { width: 101px; }
      .plate input { appearance: none; width: 15px; height: 15px; border-radius: 50%; border: 1px solid #444; background: radial-gradient(circle, #c2c2c2 3px, #5a5a5a 4px); }
      .field { flex: none; display: flex; align-items: center; position: relative; margin-left: 1px; }
      .combo { margin: 0 1px 0 0; }
      .caption { background: #555; color: #f0f0f0; height: 18px; line-height: 18px; padding-left: 9px; }
      .box { display: flex; height: 26px; border: 1px solid #b0b0b0; border-radius: 3px; background: #fff; color: #000; }
      .box.dim { background: #f0f0f0; color: #777; margin-right: 1px; }
      .box input { min-width: 0; flex: 1; padding-left: 4px; outline: 0; }
      .wide { width: 114px; }
      .mid { width: 101px; }
      .small { width: 60px; }
      .steps { width: 17px; flex: none; display: flex; flex-direction: column; align-items: center; justify-content: center; gap: 5px; border-left: 1px solid #b0b0b0; color: #555; background: #fafafa; }
      .dim .steps { color: #999; }
      .steps button { display: block; }
      .up .caret { transform: rotate(180deg); }
      select { appearance: none; width: 80px; height: 28px; border: 1px solid #b0b0b0; border-radius: 3px; background: linear-gradient(90deg, #fff 70%, #f3f3f3); padding-left: 5px; color: #000; }
      .unit select { color: #777; background: #f8f8f8; }
      .field > .caret { position: absolute; right: 10px; top: 12px; color: #444; pointer-events: none; width: 10px; }
    `,
  ];

  private item(it: Item) {
    switch (it.kind) {
      case "grip": return html`<span class="grip"></span>`;
      case "sep": return html`<span class="sep"></span>`;
      case "rgb":
      case "roi": return html`<label class="plate ${it.kind}"><input type="radio" name=${it.kind} />${it.label}</label>`;
      case "combo":
      case "unit": return html`<div class="field ${it.kind}"><select aria-label=${it.label!}><option>${it.value}</option></select>${caret}</div>`;
      case "spin": return html`
        <label class="field">
          ${it.off ? nothing : html`<span class="caption">${it.label}</span>`}
          <span class="box ${it.size!} ${it.off ? "dim" : ""}">
            <input aria-label=${it.label!} .value=${it.value!} />
            <span class="steps"><button class="up" aria-label="Increase">${caret}</button><button aria-label="Decrease">${caret}</button></span>
          </span>
        </label>`;
      default: return html`
        <button class=${classMap({ tool: true, off: !!it.off, drop: !!it.menu, pressed: it.state === "pressed", checked: it.state === "checked" })} aria-label=${it.label!}>
          ${icon(it.icon!)}${it.menu ? caret : nothing}
        </button>`;
    }
  }

  render() { return this.items.map((it) => this.item(it)); }
}

@customElement("layers-panel")
class LayersPanel extends LitElement {
  static styles = [
    shared,
    css`
      :host { display: flex; flex-direction: column; width: 287px; flex: none; background: #f0f0f0; border-left: 1px solid #b0b0b0; }
      header { display: flex; align-items: center; height: 24px; padding: 0 2px 0 4px; gap: 2px; font: 14px/20px var(--ui); }
      h2 { font: inherit; margin: 0; flex: 1; }
      .mini { width: 12px; height: 12px; border: 1px solid #666; border-radius: 3px; display: grid; place-items: center; color: #444; }
      .mini svg { width: 8px; height: 8px; display: block; }
      nav { display: flex; align-items: center; height: 26px; padding-left: 4px; margin-bottom: 3px; }
      nav .tool, nav .tool:not(.drop) { width: 25px; height: 26px; padding: 0 3px; }
      nav .tool.drop { width: 40px; gap: 6px; }
      nav .icon { width: 16px; height: 16px; }
      ul { list-style: none; margin: 0; padding: 0; flex: 1; background: #fff; border: 1px solid #b0b0b0; font: 15px/22px var(--mono); overflow: hidden; }
      .layer { display: flex; align-items: center; height: 22px; position: relative; padding-left: 8px; white-space: nowrap; color: #7c7c7c; font-weight: 700; font-style: italic; }
      .layer .caret { color: #555; margin-right: 11px; }
      .layer input { appearance: none; flex: none; width: 17px; height: 17px; border: 1px solid #bbb; background: #fff; margin-right: 8px; display: grid; place-items: center; }
      .layer input:checked::before { content: ""; width: 6px; height: 11px; margin-bottom: 2px; border: solid #000; border-width: 0 2px 2px 0; transform: rotate(35deg); }
      .layer .icon { width: 18px; height: 18px; margin-right: 6px; }
      .layer.active { background: linear-gradient(90deg, #0078d7, #1883dc); color: #fff; font-style: normal; }
      .layer.active .name { text-decoration: underline; text-underline-offset: 4px; }
      .layer.active .caret { color: #10355a; }
      .chip { position: absolute; right: 0; top: 2px; width: 12px; height: 18px; background: #e1e1e1; }
      .value { display: flex; align-items: center; gap: 6px; height: 22px; padding-left: 53px; color: #000; }
      .swatch { width: 16px; height: 16px; }
      .swatch.dark { background: #000; }
    `,
  ];

  private layers = [
    { name: "intercomp_diff_int", on: true, low: "-6867", high: "32740" },
    { name: "worldPop_clip_int_setn", on: false, low: "0", high: "25142" },
    { name: "ghsPop_clip_int_final", on: false, low: "0", high: "32767" },
  ];

  private tools: Item[] = [
    b("brush", "Layer styling"), b("group", "Add group"), b("eye", "Manage map themes"), b("filter", "Filter legend"),
    b("expr", "Filter by expression", offMenu), b("expand", "Expand all"), b("collapse", "Collapse all"), b("remove", "Remove layer"),
  ];

  render() {
    return html`
      <header>
        <h2>Layers</h2>
        <button class="mini" aria-label="Float panel"><svg viewBox="0 0 8 8" fill="none" stroke="currentColor"><path d="M2.500 .5h5v5M.5 2.500h5v5h-5z" /></svg></button>
        <button class="mini" aria-label="Close panel"><svg viewBox="0 0 8 8" stroke="currentColor" stroke-width="1.800"><path d="M1 1l6 6M7 1L1 7" /></svg></button>
      </header>
      <nav>
        ${this.tools.map((t) => html`<button class=${classMap({ tool: true, off: !!t.off, drop: !!t.menu })} aria-label=${t.label!}>${icon(t.icon!)}${t.menu ? caret : nothing}</button>`)}
      </nav>
      <ul>
        ${this.layers.map((l) => html`
          <li>
            <label class=${classMap({ layer: true, active: l.on })}>
              ${caret}<input type="checkbox" .checked=${l.on} />${icon(l.on ? "rasteron" : "raster")}<span class="name">${l.name}</span><span class="chip"></span>
            </label>
            <div class="value"><span class="swatch dark"></span>${l.low}</div>
            <div class="value"><span class="swatch"></span>${l.high}</div>
          </li>`)}
      </ul>`;
  }
}

/* ---------- map ---------- */

/** Breaks straight coast segments into short, slightly uneven steps. */
function coast(points: string): string {
  const pts = points.trim().split(/\s+/).map((p) => p.split(",").map(Number));
  let seed = 17;
  const rnd = () => ((seed = (seed * 16807) % 2147483647) / 2147483647 - 0.5) * 6;
  const out: string[] = [];
  pts.forEach(([x, y], i) => {
    const [nx, ny] = pts[(i + 1) % pts.length];
    out.push(`${x},${y}`);
    const len = Math.hypot(nx - x, ny - y);
    if (len > 110) return;
    const n = Math.floor(len / 6);
    for (let k = 1; k < n; k++) {
      out.push(`${(x + ((nx - x) * k) / n + rnd()).toFixed(0)},${(y + ((ny - y) * k) / n + rnd()).toFixed(0)}`);
    }
  });
  return out.join(" ");
}

const north = coast(`66,30 55,55 38,75 36,100 31,105 42,115 55,130 50,150 60,180 62,200 55,230 46,265 30,290 20,295 35,305 42,325 40,360 55,378 85,378 82,400 100,410
  115,430 135,440 145,460 150,495 175,512 195,522 230,550 265,580 300,598 325,597 345,585 370,578 420,575 455,580 475,587 500,575 540,560 575,547 620,541 665,541
  685,555 697,585 710,602 750,597 790,593 805,612 820,615 828,640 825,670 818,700 812,740 795,752 806,779 1765,779 1810,725 1855,685 1900,655 1950,600 1985,540
  2010,495 2035,455 2040,425 2052,420 2047,400 2050,380 2035,377 2020,388 1990,396 1935,402 1910,414 1890,412 1855,422 1835,412 1820,390 1795,388 1818,372
  1815,355 1780,325 1750,295 1715,280 1696,250 1690,215 1670,190 1645,175 1636,140 1635,100 1628,78 1610,65 1590,48 1585,30`);
const arabia = coast(`505,30 518,60 522,95 545,125 575,155 600,200 625,235 632,270 640,320 650,350 670,355 700,348 720,333 755,325 780,315 800,313 820,297 850,288
  880,278 905,268 912,245 940,235 995,225 1000,203 1035,195 1040,178 1072,165 1075,130 1095,122 1110,95 1133,68 1115,45 1098,30`);
const south = coast(`78,0 100,40 140,80 160,100 172,130 180,155 190,180 203,210 196,235 205,262 216,290 216,322 195,345 178,375 170,410 160,435 158,490 175,520 200,575
  235,628 236,685 245,705 250,746 762,746 755,735 765,718 800,703 825,695 835,680 837,640 830,605 815,570 818,552 860,520 890,487 940,467 965,450 985,415
  989,400 982,370 980,270 960,260 948,215 948,170 933,150 935,130 950,90 970,45 1000,25 1018,0`);
const madagascar = coast(`1228,322 1245,345 1255,385 1264,420 1256,440 1246,425 1243,465 1235,500 1215,560 1195,630 1180,680 1166,706 1140,713 1118,722 1095,715 1075,698
  1070,650 1059,620 1075,590 1094,555 1085,515 1078,480 1093,446 1135,435 1165,422 1185,400 1195,368 1215,362 1220,335`);

/** Bright population cells, x,y on the map grid. */
const bright = `700,316 577,415 436,439 736,358 853,409 874,407 982,436 787,472 931,455 760,511 773,547 1009,682 1120,694 1240,322 1411,373 1603,346 1270,373
  1630,358 1726,415 1636,550 1639,574 1528,583 1504,658 1543,694 1681,520 1670,520 1714,499 1510,499 1618,496 877,682 1405,715 1557,755 1440,475 1939,529 1455,600
  936,779 766,359 896,415 872,466 775,517 718,568 742,583 766,580 700,520 1660,203 1816,227 690,289 445,362 118,340 148,210 136,259 555,280 823,310`;
const brightSouth = `210,13 643,241 884,376 660,505 770,421 712,268 863,64 837,79 765,232 680,102 579,88 663,46 668,30 709,58 744,52 787,67 846,202 208,405 474,157 916,102 660,20 675,40 690,33 655,12 720,14 1125,568 1158,664 1198,558`;
const dark = `489,364 978,371 925,379 1416,910 634,536 980,860`;
const cells = (list: string, size: number) => list.trim().split(/\s+/).map((p) => { const [x, y] = p.split(","); return `M${x} ${y}h${size}v${size}h-${size}z`; }).join("");

@customElement("map-canvas")
class MapCanvas extends LitElement {
  static styles = css`
    :host { display: block; flex: 1; min-width: 0; background: #fff; border-left: 1px solid #aaa; border-top: 1px solid #aaa; overflow: hidden; }
    svg { display: block; width: 100%; height: 100%; }
    .land { fill: #2b2b2b; }
    .bright { fill: #c8c8c8; }
    .dark { fill: #0c0c0c; }
    .haze { fill: #545454; }
  `;
  render() {
    let seed = 91;
    const rnd = () => (seed = (seed * 16807) % 2147483647) / 2147483647;
    const haze = Array.from({ length: 170 }, (_, i) => {
      const [cx, cy, w, h] = [[800, 450, 260, 240], [1640, 480, 240, 330], [1420, 800, 260, 160], [480, 430, 560, 260], [1250, 1010, 700, 420]][i % 5];
      return `${Math.round(cx + (rnd() - 0.5) * w)},${Math.round(cy + (rnd() - 0.5) * h)}`;
    }).join(" ");
    return html`
      <svg viewBox="-3 -162 2352 1716" preserveAspectRatio="xMinYMin meet" shape-rendering="crispEdges" role="img" aria-label="Raster difference map of Africa">
        <polygon class="land" points=${north} />
        <g class="land">
          <path d="M783 632l10-10 5-8 1 10-6 8-6 2zM726 719l8-4v6l-4 6-3-2zM752 681h4v6h-4z" />
          <path d="M55 388h4v4h-4zM62 384h6v4h-6zM70 392h4v4h-4zM58 398h5v4h-5zM66 400h4v4h-4z" />
        </g>
        <g class="land" transform="translate(1170 0)">
          <polygon points=${arabia} />
          <path d="M940 354h10v3h10v-2h8v3h10v3h-8v3h-20v-4h-8zM905 366h6v3h-6zM600 228h5v3h6v5h-8zM612 234h6v4h-6zM1100 120h6v5l-5 6zM1014 209h8v3h-8zM545 250h4v5h-4zM550 262h8v5h-8zM568 188h3v3h-3zM490 170h6v3h-6z" />
        </g>
        <g class="land" transform="translate(720 765) scale(1.033 1)">
          <polygon points=${south} />
          <polygon points=${madagascar} />
          <path d="M1401 588l6-4 8 5 1 9-8 2-6-6zM1463 564l6-6 4-5v8l-4 10-7 1zM1058 303h4v12h6v4h-9zM1069 328h4v4h-4zM1090 325h5v4h-5zM1110 343h7v4h-4v4h-4zM1400 96h6v3h3v4h-4zM1412 93h7v3h-7zM953 113h6v9h-7zM943 138l8 8-1 12-6-4zM956 195h6v4h-6z" />
          <path d="M1150 243h3v3h-3zM1179 252h3v3h-3zM1283 264h3v3h-3zM1344 135h3v3h-3zM1522 462h3v3h-3zM833 605h3v15h-3zM978 330h6v14h-6z" />
        </g>
        <path class="land" d="M366 1204h6v3h-6z" />
        <path class="haze" d=${cells(haze, 3)} />
        <path class="bright" d=${cells(bright, 3)} />
        <path class="bright" transform="translate(720 765) scale(1.033 1)" d=${cells(brightSouth, 3)} />
        <path class="dark" d=${cells(dark, 5)} />
      </svg>`;
  }
}

/* ---------- application window ---------- */

@customElement("app-root")
class AppRoot extends LitElement {
  static styles = [
    shared,
    css`
      :host { display: flex; flex-direction: column; height: 100vh; overflow: hidden; background: #f0f0f0; color: #000; }
      .title { display: flex; align-items: center; gap: 5px; height: 29px; flex: none; padding-left: 2px; background: #fff; font: 14px/20px var(--ui); }
      .title .icon { width: 20px; height: 20px; }
      .menubar { display: flex; align-items: center; gap: 15px; height: 25px; flex: none; padding-left: 11px; border-bottom: 1px solid #d6d6d6; font: 15px/20px var(--mono); }
      .menubar a { color: inherit; text-decoration: none; }
      .menubar u { text-underline-offset: 3px; }
      main { flex: 1; display: flex; min-height: 0; }
      .side { width: 54px; flex: none; background: linear-gradient(90deg, #fbfbfb, #ececec); border-right: 1px solid #b0b0b0; padding-left: 3px; }
      .side .drop { gap: 6px; }
      .hgrip { height: 13px; display: flex; justify-content: center; align-items: center; }
      .hgrip::before { content: ""; width: 18px; height: 6px; background: radial-gradient(circle at 1px 1px, #b5b5b5 0.6px, transparent 1px) 0 0 / 3px 3px; }
      .split { width: 7px; flex: none; display: grid; place-items: center; }
      .split::before { content: ""; width: 3px; height: 21px; margin-top: 216px; background: radial-gradient(circle at 1px 1px, #a9a9a9 0.6px, transparent 1px) 0 0 / 3px 3px; }
    `,
  ];

  private menus = ["Pro_ject", "_Edit", "_View", "_Layer", "_Settings", "_Plugins", "Vect_or", "_Raster", "_Database", "_Web", "_Mesh", "SCP", "Pro_cessing", "_Help"];

  private side: Item[] = [
    b("addvector", "Add vector layer"), b("addraster", "Add raster layer"), b("addmesh", "Add mesh layer"), b("addcsv", "Add delimited text layer"), b("addspatia", "Add SpatiaLite layer"), b("addvirtual", "Add virtual layer"),
    b("addpg", "Add PostGIS layer", { menu: true }), b("addwms", "Add WMS layer", { menu: true }), b("addwcs", "Add WCS layer"), b("addwfs", "Add WFS layer", { menu: true }), b("newshape", "New layer", { menu: true }),
  ];

  private menuItem(text: string) {
    const [head, tail] = text.split("_");
    return html`<a href="#">${head}${tail ? html`<u>${tail[0]}</u>${tail.slice(1)}` : nothing}</a>`;
  }

  render() {
    return html`
      <div class="title">${icon("logo")}<span>*Untitled Project - QGIS</span></div>
      <nav class="menubar">${this.menus.map((m) => this.menuItem(m))}</nav>
      ${rows.map((r) => html`<tool-row .items=${r}></tool-row>`)}
      <main>
        <div class="side">
          <div class="hgrip"></div>
          ${this.side.map((t) => html`<button class=${classMap({ tool: true, drop: !!t.menu })} aria-label=${t.label!}>${icon(t.icon!)}${t.menu ? caret : nothing}</button>`)}
        </div>
        <layers-panel></layers-panel>
        <div class="split"></div>
        <map-canvas></map-canvas>
      </main>`;
  }
}
